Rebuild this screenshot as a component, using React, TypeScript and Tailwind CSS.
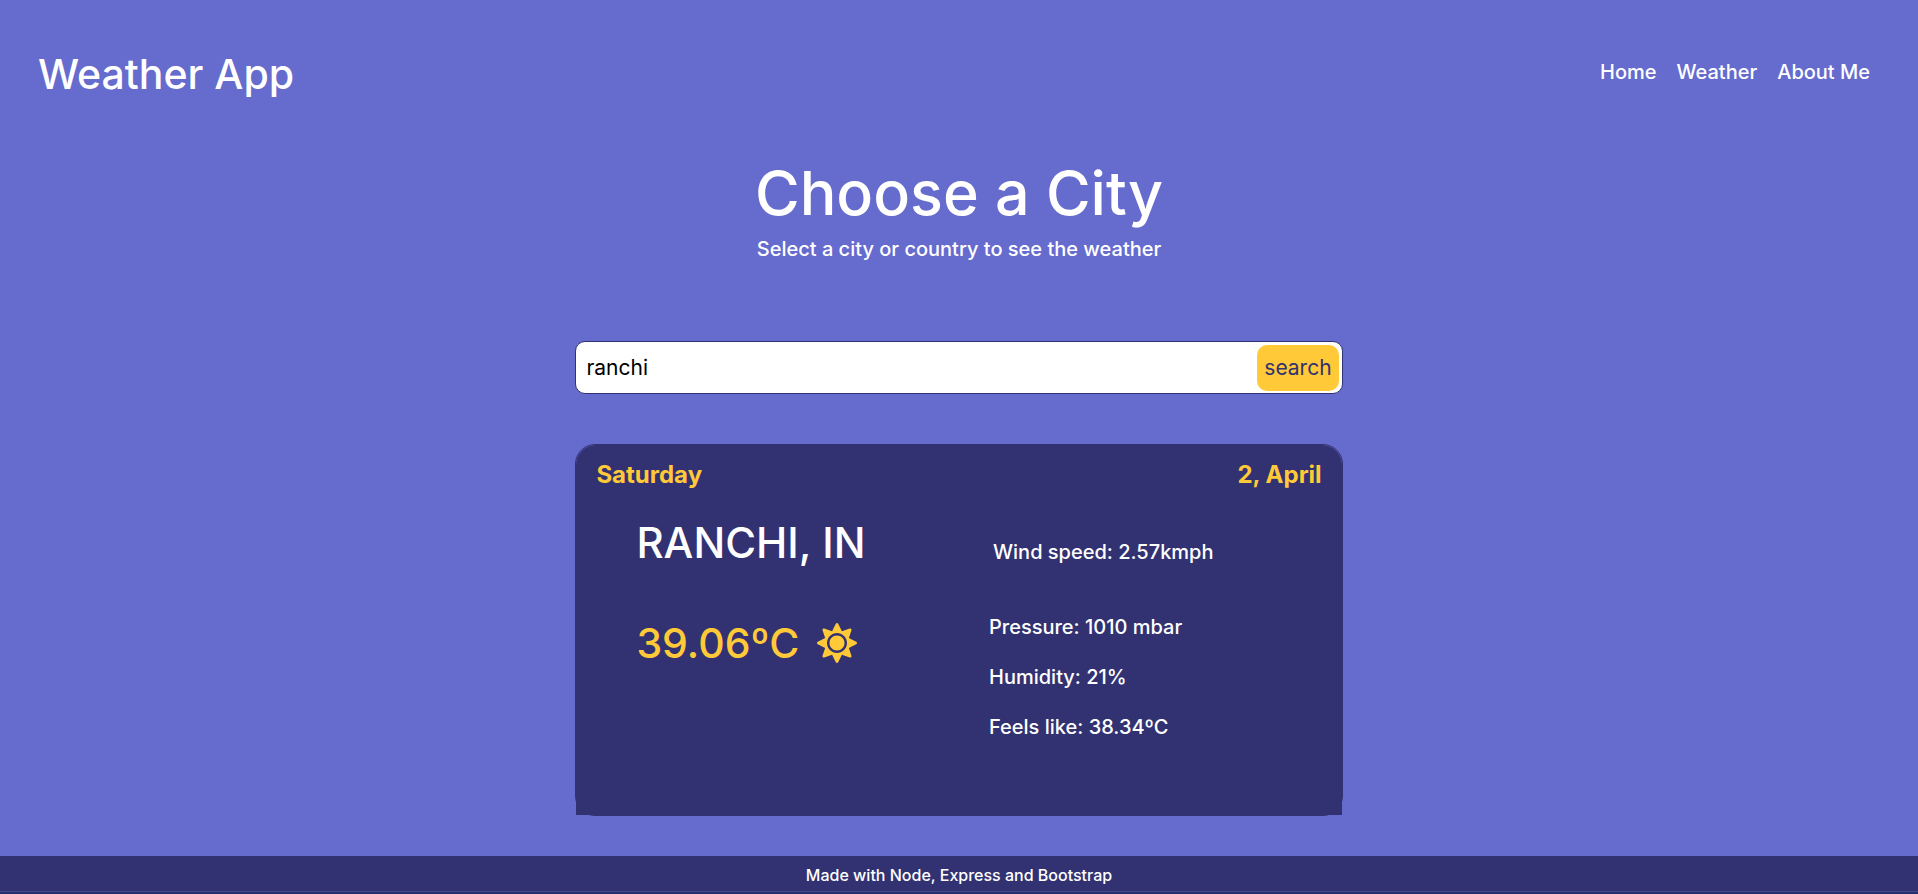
import { useState } from "react";
import { FaSun } from "react-icons/fa";

const links = ["Home", "Weather", "About Me"];

const details = ["Pressure: 1010 mbar", "Humidity: 21%", "Feels like: 38.34ºC"];

function Header() {
  return (
    <header className="flex items-start justify-between pt-12 pr-12 pl-[38px]">
      <a href="#home" className="text-[41px] leading-[52px]">
        Weather App
      </a>
      <nav className="flex gap-5 pt-2 text-[20px] leading-8">
        {links.map((link) => (
          <a key={link} href="#">
            {link}
          </a>
        ))}
      </nav>
    </header>
  );
}

function SearchBar() {
  const [city, setCity] = useState("ranchi");
  return (
    <form
      onSubmit={(event) => event.preventDefault()}
      className="flex h-[53px] w-full items-center rounded-[10px] border border-[#323272] bg-white pr-[3px]"
    >
      <input
        type="text"
        aria-label="City"
        value={city}
        onChange={(event) => setCity(event.target.value)}
        className="min-w-0 flex-1 bg-transparent px-[10px] text-[21px] font-normal text-black outline-none"
      />
      <button
        type="submit"
        className="h-[46px] rounded-[10px] bg-[#ffc937] px-[7px] text-[21px] font-normal text-[#323272]"
      >
        search
      </button>
    </form>
  );
}

function WeatherCard() {
  return (
    <section className="mt-[50px] w-full rounded-[20px] border border-[#323272]">
      <div className="min-h-[370px] rounded-t-[20px] bg-[#323272] px-5 pt-3">
        <div className="flex justify-between text-[24px] leading-9 font-bold text-[#ffc937]">
          <h2>Saturday</h2>
          <p>2, April</p>
        </div>
        <div className="grid grid-cols-2 pt-6">
          <div className="pl-10 leading-[52px]">
            <h3 className="text-[42px]">RANCHI, IN</h3>
            <p className="flex items-center gap-[18px] pt-12 text-[41px] text-[#ffc937]">
              39.06ºC
              <FaSun className="size-10" aria-hidden="true" />
            </p>
          </div>
          <div className="pl-[30px] text-[20px] leading-[30px]">
            <p className="pt-5 pl-1">Wind speed: 2.57kmph</p>
            <ul className="flex flex-col gap-5 pt-[45px]">
              {details.map((detail) => (
                <li key={detail}>{detail}</li>
              ))}
            </ul>
          </div>
        </div>
      </div>
    </section>
  );
}

export default function App() {
  return (
    <div className="flex min-h-screen flex-col bg-[#666bce] font-['Inter','Liberation_Sans',sans-serif] font-medium text-white">
      <Header />
      <main className="mx-auto flex w-2/5 flex-1 flex-col items-center pt-[57px] pb-10">
        <h1 className="text-[61px] leading-[72px] whitespace-nowrap">Choose a City</h1>
        <p className="pt-1 pb-[76px] text-[20px] leading-8 whitespace-nowrap">
          Select a city or country to see the weather
        </p>
        <SearchBar />
        <WeatherCard />
      </main>
      <footer className="border-b-2 border-[#25306f] bg-[#323272] text-center text-[16px] leading-6">
        <p className="border-b border-[#484880] pt-[7px] pb-1">Made with Node, Express and Bootstrap</p>
      </footer>
    </div>
  );
}
